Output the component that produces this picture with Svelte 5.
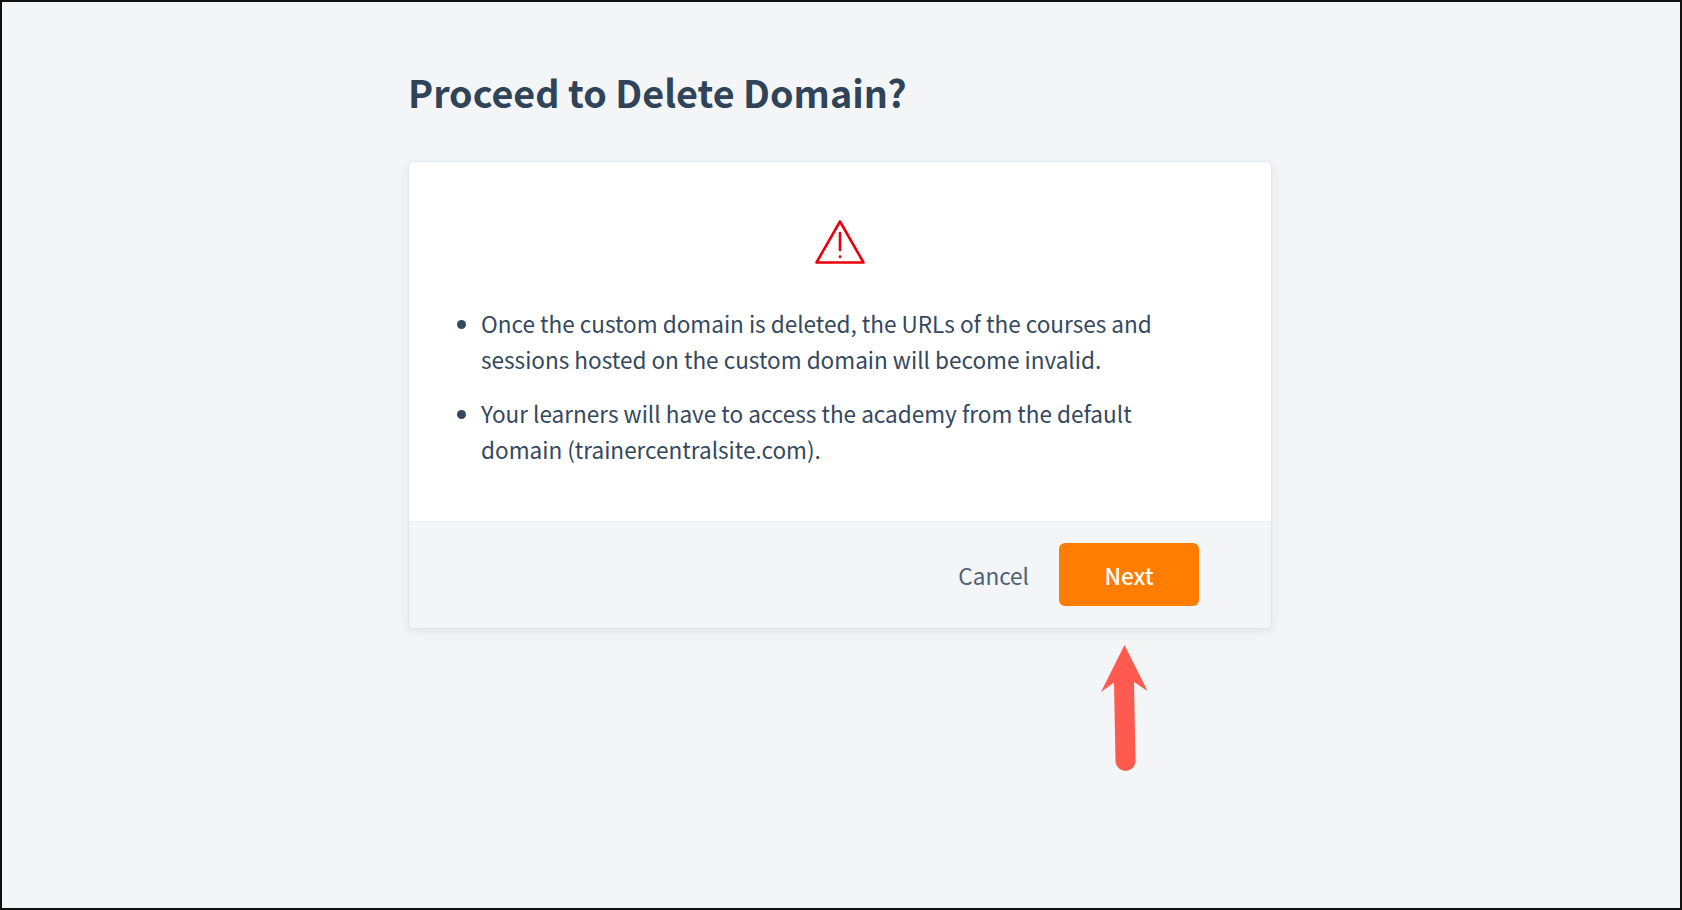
<script lang="ts">
  const notes = [
    'Once the custom domain is deleted, the URLs of the courses and sessions hosted on the custom domain will become invalid.',
    'Your learners will have to access the academy from the default domain (trainercentralsite.com).'
  ];
</script>

<div class="page">
  <main class="panel">
    <h1>Proceed to Delete Domain?</h1>
    <section class="card">
      <div class="body">
        <svg class="warn" width="50" height="44" viewBox="0 0 50 44" fill="none" stroke="#e8000d" stroke-width="2.6" stroke-linejoin="round" stroke-linecap="round">
          <path d="M25 1.5 1.5 42.5h47z" />
          <path d="M25 13v17" />
          <path d="M25 36.6v.4" />
        </svg>
        <ul>
          {#each notes as note}
            <li>{note}</li>
          {/each}
        </ul>
      </div>
      <footer>
        <button class="cancel">Cancel</button>
        <button class="next">Next</button>
      </footer>
    </section>
  </main>

  <!-- annotation arrow on top of the screenshot -->
  <svg class="arrow" width="50" height="130" viewBox="0 0 50 130">
    <path d="M25.5 1 48.5 47 35 38 36.5 117a10 10 0 0 1-20 0L15 38.5 2 48z" fill="#ff5a4f" />
  </svg>
</div>

<style>
  :global(body) {
    margin: 0;
  }
  .page {
    position: relative;
    box-sizing: border-box;
    width: 1682px;
    height: 910px;
    overflow: hidden;
    background: #f3f5f7;
    border: 2px solid #111;
    font-family: "Noto Sans CJK SC", Lato, sans-serif;
    color: #34485e;
  }
  .panel {
    width: 864px;
    margin-left: 406px;
    padding-top: 64px;
  }
  h1 {
    margin: 0 0 43px;
    font-size: 37.7px;
    line-height: 52px;
    font-weight: 700;
    color: #2f4359;
  }
  .card {
    background: #fff;
    border: 1px solid #e0e7ec;
    border-radius: 6px;
    box-shadow: 0 3px 10px rgba(70, 100, 130, 0.1);
    overflow: hidden;
  }
  .body {
    display: flex;
    flex-direction: column;
    align-items: center;
    box-sizing: border-box;
    padding-top: 58px;
    height: 359px;
  }
  .warn {
    flex: none;
  }
  ul {
    margin: 41px 0 0;
    padding: 0 60px 0 72px;
    box-sizing: border-box;
    width: 100%;
    list-style: disc;
    font-size: 22.55px;
    line-height: 36px;
  }
  li {
    margin-bottom: 18px;
  }
  footer {
    display: flex;
    justify-content: flex-end;
    align-items: center;
    gap: 30px;
    height: 107px;
    padding-right: 72px;
    padding-bottom: 1px;
    box-sizing: border-box;
    background: #f3f5f7;
    border-top: 1px solid #ebeef2;
  }
  button {
    font: inherit;
    border: 0;
    padding: 0;
    background: none;
  }
  .cancel {
    font-size: 22.55px;
    color: #4f6176;
  }
  .next {
    width: 140px;
    height: 63px;
    border-radius: 6px;
    background: #ff7d00;
    color: #fff;
    font-size: 22.55px;
    font-weight: 500;
  }
  .arrow {
    position: absolute;
    left: 1097px;
    top: 642px;
  }
</style>
